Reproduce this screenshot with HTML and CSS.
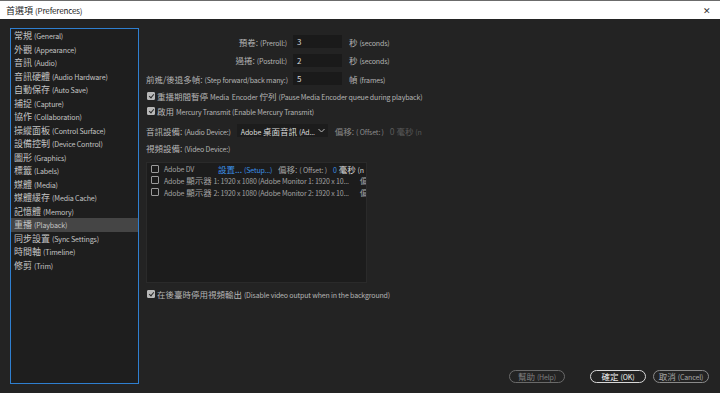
FILE: index.html
```html
<!DOCTYPE html>
<html lang="zh-Hant">
<head>
  <meta charset="UTF-8" />
  <title>首選項 (Preferences)</title>
  <link rel="stylesheet" href="styles.css">
</head>
<body>
  <div class="titlebar">
    <span class="title">首選項 <span class="en">(Preferences)</span></span>
    <span class="close">&#x2715;</span>
  </div>

  <div class="dialog">
    <ul class="sidebar">
      <li>常規 <span class="en">(General)</span></li>
      <li>外觀 <span class="en">(Appearance)</span></li>
      <li>音訊 <span class="en">(Audio)</span></li>
      <li>音訊硬體 <span class="en">(Audio Hardware)</span></li>
      <li>自動保存 <span class="en">(Auto Save)</span></li>
      <li>捕捉 <span class="en">(Capture)</span></li>
      <li>協作 <span class="en">(Collaboration)</span></li>
      <li>操縱面板 <span class="en">(Control Surface)</span></li>
      <li>設備控制 <span class="en">(Device Control)</span></li>
      <li>圖形 <span class="en">(Graphics)</span></li>
      <li>標籤 <span class="en">(Labels)</span></li>
      <li>媒體 <span class="en">(Media)</span></li>
      <li>媒體緩存 <span class="en">(Media Cache)</span></li>
      <li>記憶體 <span class="en">(Memory)</span></li>
      <li class="selected">重播 <span class="en">(Playback)</span></li>
      <li>同步設置 <span class="en">(Sync Settings)</span></li>
      <li>時間軸 <span class="en">(Timeline)</span></li>
      <li>修剪 <span class="en">(Trim)</span></li>
    </ul>

    <div class="content">
      <div class="fields">
        <label class="field-label">預卷: <span class="en">(Preroll:)</span></label>
        <div class="num-input">3</div>
        <span class="unit">秒 <span class="en">(seconds)</span></span>

        <label class="field-label">過捲: <span class="en">(Postroll:)</span></label>
        <div class="num-input">2</div>
        <span class="unit">秒 <span class="en">(seconds)</span></span>

        <label class="field-label">前進/後退多幀: <span class="en">(Step forward/back many:)</span></label>
        <div class="num-input">5</div>
        <span class="unit">幀 <span class="en">(frames)</span></span>
      </div>

      <div class="check-row first">
        <span class="checkbox checked"></span>
        <span>重播期間暫停 <span class="en">Media &nbsp;Encoder</span> 佇列 <span class="en">(Pause Media Encoder queue during playback)</span></span>
      </div>
      <div class="check-row">
        <span class="checkbox checked"></span>
        <span>啟用 <span class="en">Mercury Transmit (Enable Mercury Transmit)</span></span>
      </div>

      <div class="audio-row">
        <span class="row-label">音訊設備: <span class="en">(Audio Device:)</span></span>
        <div class="select">
          <span class="select-text"><span class="en">Adobe</span> 桌面音訊 <span class="en">(Ad...</span></span>
          <svg class="chevron" width="7" height="5" viewBox="0 0 7 5"><path d="M0.5 1 L3.5 4 L6.5 1" fill="none" stroke="#bdbdbd" stroke-width="1"/></svg>
        </div>
        <span class="offset dim">偏移: <span class="en">( Offset: )</span></span>
        <span class="offset-value">0 毫秒 <span class="en">(n</span></span>
      </div>

      <div class="row-label video-label">視頻設備: <span class="en">(Video Device:)</span></div>

      <div class="device-list">
        <div class="device-row">
          <span class="checkbox"></span>
          <span class="device-name short en">Adobe DV</span>
          <span class="setup">設置... <span class="en">(Setup...)</span></span>
          <span class="device-offset">偏移: <span class="en">( Offset: )</span></span>
          <span class="device-value"><span class="blue en">0</span> 毫秒 <span class="en">(n</span></span>
        </div>
        <div class="device-row">
          <span class="checkbox"></span>
          <span class="device-name"><span class="en">Adobe</span> 顯示器 <span class="en">1: 1920 x 1080 (Adobe Monitor 1: 1920 x 10...</span></span>
          <span class="device-offset far">偏移</span>
        </div>
        <div class="device-row">
          <span class="checkbox"></span>
          <span class="device-name"><span class="en">Adobe</span> 顯示器 <span class="en">2: 1920 x 1080 (Adobe Monitor 2: 1920 x 10...</span></span>
          <span class="device-offset far">偏移</span>
        </div>
      </div>

      <div class="check-row bg-row">
        <span class="checkbox checked"></span>
        <span>在後臺時停用視頻輸出 <span class="en">(Disable video output when in the background)</span></span>
      </div>

      <div class="footer">
        <button class="btn btn-help">幫助 <span class="en">(Help)</span></button>
        <button class="btn btn-ok">確定 <span class="en">(OK)</span></button>
        <button class="btn">取消 <span class="en">(Cancel)</span></button>
      </div>
    </div>
  </div>
</body>
</html>
```

FILE: styles.css
```css
* {
  margin: 0;
  padding: 0;
  box-sizing: border-box;
}

body {
  width: 720px;
  height: 393px;
  overflow: hidden;
  background: #232323;
  font-family: "Noto Sans CJK TC", "Noto Sans", sans-serif;
  font-size: 8.5px;
  color: #b4b4b4;
}

.en {
  font-size: 7px;
  letter-spacing: -0.15px;
}

/* Title bar */
.titlebar {
  height: 19px;
  background: #fff;
  border-top: 1px solid #6b6b6b;
  display: flex;
  align-items: center;
  justify-content: space-between;
  padding: 0 9px 0 6px;
  color: #1c1c1c;
  font-size: 9px;
}

.titlebar .en {
  font-size: 8px;
}

.close {
  font-size: 9px;
  color: #333;
}

/* Dialog */
.dialog {
  display: flex;
  height: 374px;
  padding: 9px 10px 9px 10px;
}

.sidebar {
  list-style: none;
  width: 129px;
  height: 356px;
  border: 1px solid #2f7fd0;
  background: #1e1e1e;
}

.sidebar li {
  height: 13.5px;
  line-height: 13.5px;
  padding-left: 3px;
  color: #c4c4c4;
  font-size: 9px;
  white-space: nowrap;
}

.sidebar li .en {
  font-size: 7.1px;
}

.sidebar li.selected {
  background: #454545;
}

.content {
  flex: 1;
  margin-left: 7px;
  display: flex;
  flex-direction: column;
  white-space: nowrap;
}

/* Number fields */
.fields {
  display: grid;
  grid-template-columns: 141px 49px auto;
  column-gap: 6px;
  row-gap: 5.5px;
  align-items: center;
  margin-top: 7px;
}

.field-label {
  text-align: right;
}

.num-input {
  height: 13px;
  line-height: 13px;
  background: #1a1a1a;
  padding-left: 4px;
  color: #d6d6d6;
  font-size: 8px;
}

.unit {
  margin-left: 1px;
}

/* Checkboxes */
.check-row {
  display: flex;
  align-items: center;
  gap: 2px;
  height: 12px;
  margin-top: 3px;
  padding-left: 1px;
}

.check-row.first {
  margin-top: 4.5px;
}

.checkbox {
  width: 8px;
  height: 8px;
  border: 1px solid #9a9a9a;
  border-radius: 1px;
  flex-shrink: 0;
  position: relative;
}

.checkbox.checked {
  background: #b8b8b8;
  border-color: #b8b8b8;
}

.checkbox.checked::after {
  content: "";
  position: absolute;
  left: 1.5px;
  top: 0px;
  width: 2px;
  height: 4px;
  border-right: 1.2px solid #2a2a2a;
  border-bottom: 1.2px solid #2a2a2a;
  transform: rotate(40deg);
}

/* Audio device */
.audio-row {
  display: flex;
  align-items: center;
  height: 14px;
  margin-top: 7px;
  width: 280px;
  overflow: hidden;
}

.select {
  display: flex;
  align-items: center;
  justify-content: space-between;
  width: 91px;
  height: 13px;
  margin-left: 6px;
  padding: 0 3px 0 4px;
  background: #1c1c1c;
  color: #dcdcdc;
}

.offset {
  margin-left: 7px;
}

.dim {
  color: #8a8a8a;
}

.offset-value {
  margin-left: 6px;
  color: #5a5a5a;
}

.video-label {
  height: 12px;
  line-height: 12px;
  margin-top: 4px;
}

/* Video devices */
.device-list {
  width: 221px;
  height: 121px;
  margin-top: 8px;
  background: #1c1c1c;
  border: 1px solid #2a2a2a;
  padding: 0 0 0 4px;
  overflow: hidden;
}

.device-row {
  display: flex;
  align-items: center;
  height: 12px;
  color: #a2a2a2;
}

.device-row:first-child {
  height: 11px;
  margin-top: 0.5px;
}

.device-name {
  margin-left: 5px;
  flex-shrink: 0;
}

.device-name.short {
  width: 54px;
}

.setup {
  width: 55px;
  color: #3b8fe6;
  flex-shrink: 0;
}

.device-offset {
  margin-left: 5px;
  flex-shrink: 0;
}

.device-offset.far {
  margin-left: 11px;
}

.device-value {
  margin-left: 6px;
  color: #d8d8d8;
  flex-shrink: 0;
}

.blue {
  color: #3b8fe6;
}

.bg-row {
  margin-top: 5px;
}

/* Footer buttons */
.footer {
  margin-top: auto;
  display: flex;
  justify-content: flex-end;
  align-items: center;
  gap: 7px;
  padding-right: 1px;
  margin-bottom: 1px;
}

.btn {
  width: 56px;
  height: 13px;
  border: 1px solid #8a8a8a;
  border-radius: 7px;
  background: transparent;
  color: #a8a8a8;
  font-family: inherit;
  font-size: 8.5px;
  line-height: 11px;
  white-space: nowrap;
}

.btn-help {
  margin-right: 18px;
  border-color: #6a6a6a;
  color: #7e7e7e;
}

.btn-ok {
  border-color: #d8d8d8;
  color: #eeeeee;
}
```
